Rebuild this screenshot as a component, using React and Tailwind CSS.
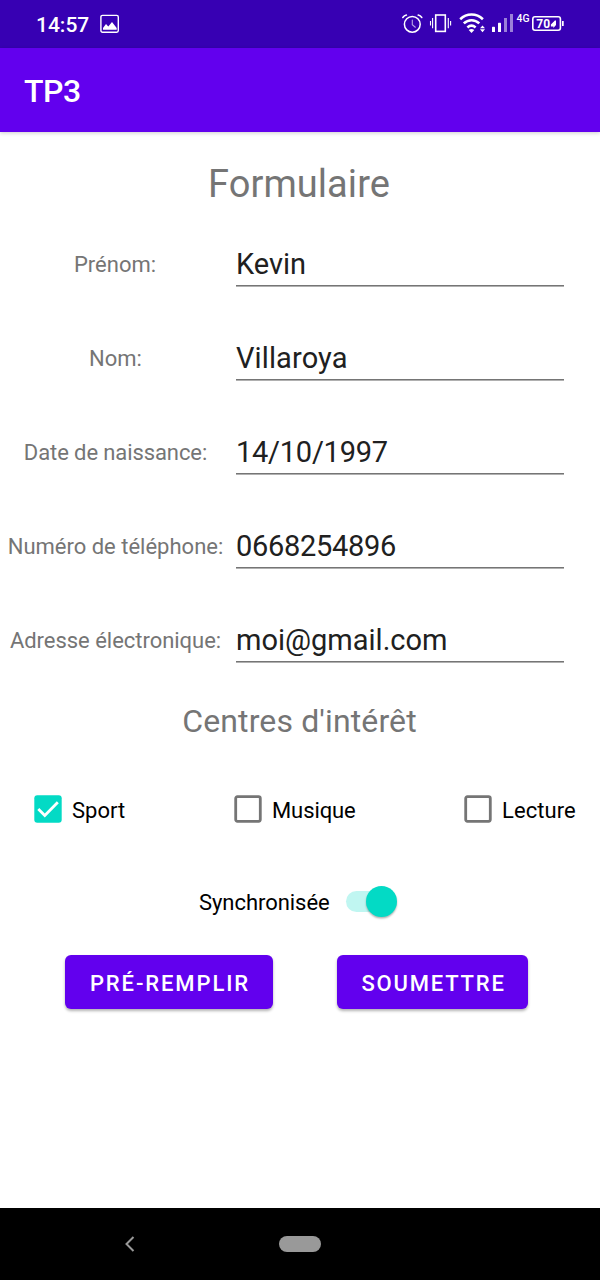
const fields = [
  { label: "Prénom:", value: "Kevin", labelClass: "pr-px", valueClass: "" },
  { label: "Nom:", value: "Villaroya", labelClass: "", valueClass: "tracking-[0.12px]" },
  { label: "Date de naissance:", value: "14/10/1997", labelClass: "tracking-[-0.1px]", valueClass: "tracking-[-0.25px]" },
  { label: "Numéro de téléphone:", value: "0668254896", labelClass: "", valueClass: "tracking-[-0.3px]" },
  { label: "Adresse électronique:", value: "moi@gmail.com", labelClass: "tracking-[-0.03px]", valueClass: "" },
];

function StatusBar() {
  return (
    <div className="flex h-12 shrink-0 items-center bg-[#3700b3] pl-9 pr-[35px] text-white">
      <span className="w-[54px] whitespace-nowrap pt-0.5 text-[21px] font-medium leading-6">14:57</span>
      <svg className="ml-2.5 h-5 w-5" viewBox="0 0 20 20" fill="none">
        <rect x="0.9" y="1.4" width="17.4" height="16.8" rx="1.6" stroke="currentColor" strokeWidth="1.4" />
        <path d="M3 15.8V14l3-4 2.3 2.6L12 8l4.7 6v1.8z" fill="currentColor" />
      </svg>
      <svg className="ml-auto h-12 w-[163px]" viewBox="402 0 163 48" fill="none" stroke="white">
        <g strokeWidth="1.5" strokeLinecap="round">
          <circle cx="412.3" cy="24.3" r="7.9" strokeWidth="1.5" />
          <path d="M402.8 17.5q1.3-2 3.6-2.4M421.8 17.5q-1.3-2-3.6-2.4" strokeWidth="1.5" />
          <path d="M412.3 20v4.8l3 2.4" strokeWidth="1.1" opacity=".65" />
        </g>
        <rect x="435.7" y="15" width="9.6" height="16.4" strokeWidth="1.6" />
        <path d="M432.6 18v10.2M430.5 21v4.5M448.3 18v10.2M450.6 21v4.5" strokeWidth="1.1" />
        <g strokeWidth="2.6">
          <path d="M460.2 19.2c6.5-6.2 16.2-6.2 22.7 0" />
          <path d="M463.8 23.4c4.5-4.3 11-4.3 15.5 0" />
          <path d="M467.4 27.5c2.5-2.2 5.7-2.2 8.2 0" />
        </g>
        <path d="M468.7 30q2.8-1.8 5.6 0l-2.8 2.9zM480 28.3l2.5-2.9 2.5 2.9zM480 29.3h5l-2.5 2.9z" fill="white" stroke="none" />
        <g fill="white" stroke="none">
          <rect x="492" y="26.8" width="3" height="5.2" rx=".6" />
          <rect x="498" y="22.8" width="3" height="9.2" rx=".6" />
          <rect x="504" y="18" width="3" height="14" opacity=".5" />
          <rect x="510" y="14" width="3" height="18" opacity=".5" />
        </g>
        <text x="516.5" y="22.2" fill="white" stroke="none" fontSize="11" fontWeight="500" textLength="13" lengthAdjust="spacingAndGlyphs">4G</text>
        <rect x="532.8" y="16.8" width="27.6" height="13.4" rx="2.2" strokeWidth="1.6" />
        <path d="M562 21h1.7v5H562" fill="white" stroke="none" />
        <text x="536.2" y="28" fill="white" stroke="none" fontSize="12" fontWeight="700" textLength="14">70</text>
        <path d="M554.9 20.5l-4 4.1v1.9h2.5v1.5l2.6-3V20.5z" fill="white" stroke="none" />
      </svg>
    </div>
  );
}

function CheckItem({ label, checked = false, labelClass = "" }) {
  return (
    <div className="flex items-center">
      <svg className="h-7 w-7 shrink-0" viewBox="0 0 28 28" fill="none">
        {checked ? (
          <>
            <rect x="0.3" y="0.3" width="27.4" height="27.4" rx="3" fill="#03dac5" />
            <path d="M4.3 13.9l6.5 6.5L23.8 7.3" stroke="white" strokeWidth="2.8" />
          </>
        ) : (
          <rect x="1.7" y="1.7" width="24.6" height="24.6" rx="1.7" stroke="#757575" strokeWidth="2.8" />
        )}
      </svg>
      <span className={"ml-2.5 whitespace-nowrap pt-1 text-[22px] leading-6 text-black " + labelClass}>{label}</span>
    </div>
  );
}

function Button({ children, className }) {
  return (
    <button
      className={
        "h-[54px] whitespace-nowrap rounded-[6px] bg-[#6200ee] pt-[3px] text-center text-[22px] font-medium leading-none text-white shadow-[0_2px_3px_rgba(0,0,0,0.3)] " +
        className
      }
    >
      {children}
    </button>
  );
}

export default function App() {
  return (
    <div className="flex h-[1280px] w-[600px] flex-col overflow-hidden bg-white font-[Roboto,sans-serif]">
      <StatusBar />
      <header className="flex h-[84px] shrink-0 items-center bg-[#6200ee] pl-6 pt-0.5 text-[32px] font-medium tracking-[-0.4px] text-white shadow-[0_1px_4px_rgba(0,0,0,0.2)]">
        TP3
      </header>
      <main className="flex flex-1 flex-col">
        <h1 className="flex h-[86px] items-center justify-center pt-[19px] pr-[2px] text-[38px] tracking-[0.07px] text-[#757575]">
          Formulaire
        </h1>
        {fields.map((f) => (
          <div key={f.label} className="flex h-[94px] items-center">
            <div className={"w-[231px] whitespace-nowrap text-center text-[22px] leading-7 text-[#757575] " + f.labelClass}>
              {f.label}
            </div>
            <div
              className={
                "mb-[3px] ml-[5px] flex h-[45px] w-[328px] items-center border-b border-[#757575] pt-1 text-[29px] text-[#202020] shadow-[0_1px_0_#b0b0b0] " +
                f.valueClass
              }
            >
              {f.value}
            </div>
          </div>
        ))}
        <h2 className="flex h-[66px] items-center justify-center pr-px text-[32px] tracking-[0.12px] text-[#757575]">
          Centres d&apos;intérêt
        </h2>
        <div className="mt-[41px] flex h-7 pl-[34px]">
          <div className="w-[200px]"><CheckItem label="Sport" checked /></div>
          <div className="w-[230px]"><CheckItem label="Musique" labelClass="tracking-[-0.1px]" /></div>
          <CheckItem label="Lecture" labelClass="tracking-[0.08px]" />
        </div>
        <div className="mt-[62px] flex h-8 items-center pl-[199px]">
          <span className="w-[147px] whitespace-nowrap pt-1 text-[22px] leading-6 tracking-[-0.05px] text-black">Synchronisée</span>
          <div className="flex h-[21px] w-[50px] items-center justify-end rounded-full bg-[#c0f6f1]">
            <div className="-mr-px h-[31px] w-[31px] shrink-0 rounded-full bg-[#03dac5] shadow-[0_1.5px_2px_rgba(0,0,0,0.3)]" />
          </div>
        </div>
        <div className="mt-[38px] flex gap-16 pl-[65px]">
          <Button className="w-[208px] pl-[2px] tracking-[1.9px]">PRÉ-REMPLIR</Button>
          <Button className="w-[191px] pl-[2px] tracking-[1.8px]">SOUMETTRE</Button>
        </div>
      </main>
      <nav className="flex h-[72px] shrink-0 items-center bg-black pl-[124px]">
        <svg className="h-4 w-3" viewBox="0 0 12 16" fill="none">
          <path d="M9.5 1L2.5 8l7 7" stroke="#999999" strokeWidth="2" />
        </svg>
        <div className="ml-[143px] h-4 w-[42px] rounded-full bg-[#999999]" />
      </nav>
    </div>
  );
}
